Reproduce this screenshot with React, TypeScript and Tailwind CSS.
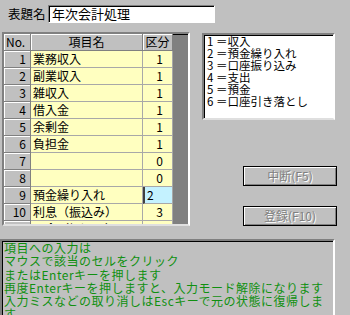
const rows: [number, string, string][] = [
  [1, "業務収入", "1"],
  [2, "副業収入", "1"],
  [3, "雑収入", "1"],
  [4, "借入金", "1"],
  [5, "余剰金", "1"],
  [6, "負担金", "1"],
  [7, "", "0"],
  [8, "", "0"],
  [9, "預金繰り入れ", "2"],
  [10, "利息（振込み）", "3"],
  [11, "入金（振込み）", "3"],
];

const kinds = [
  "1 ＝収入",
  "2 ＝預金繰り入れ",
  "3 ＝口座振り込み",
  "4 ＝支出",
  "5 ＝預金",
  "6 ＝口座引き落とし",
];

const help = [
  "項目への入力は",
  "マウスで該当のセルをクリック",
  "またはEnterキーを押します",
  "再度Enterキーを押しますと、入力モード解除になります",
  "入力ミスなどの取り消しはEscキーで元の状態に復帰しま",
  "す",
];

const fixedCell =
  "bg-[#c0c0c0] border-r border-b border-[#808080] shadow-[inset_1px_1px_0_#fff]";

const App = () => {
  return (
    <div className="w-[350px] h-[315px] overflow-hidden bg-[#c0c0c0] text-black font-['Noto_Sans_CJK_JP',sans-serif]">
      {/* title */}
      <div className="flex items-center pt-[5px] pl-[8px] h-[23px]">
        <span className="w-[40px] text-[12.5px] leading-[18px] whitespace-nowrap">表題名</span>
        <div className="w-[167px] h-[18px] bg-white border border-t-[#808080] border-l-[#808080] border-r-white border-b-white shadow-[inset_1px_1px_0_#000] pl-[3px] text-[13px] leading-[16px]">
          年次会計処理
        </div>
      </div>

      <div className="flex mt-[9px]">
        {/* grid */}
        <div className="ml-[2px] w-[188px] h-[194px] border-2 border-t-[#808080] border-l-[#808080] border-r-white border-b-[#dfdfdf] bg-[#808080] overflow-hidden shadow-[inset_1px_1px_0_#000]">
          <div className="flex h-[17px] text-[12px] leading-[16px]">
            <div className={`${fixedCell} w-[27px] pl-[2px]`}>No.</div>
            <div className={`${fixedCell} w-[112px] text-center`}>項目名</div>
            <div className={`${fixedCell} w-[30px] text-center`}>区分</div>
          </div>
          {rows.map(([no, name, kind]) => (
            <div key={no} className="flex h-[17px] text-[12px] leading-[16px]">
              <div className={`${fixedCell} w-[27px] text-right pr-[4px]`}>{no}</div>
              <div className="w-[112px] bg-[#ffffc0] border-r border-b border-[#a8a8a8] pl-[2px] whitespace-nowrap">
                {name}
              </div>
              {no === 9 ? (
                <div className="w-[30px] bg-[#c4f2ff] border-r border-b border-[#a8a8a8] border-l-2 border-l-[#404040] pl-[2px]">
                  {kind}
                </div>
              ) : (
                <div className="w-[30px] bg-[#ffffc0] border-r border-b border-[#a8a8a8] text-right pr-[9px]">
                  {kind}
                </div>
              )}
            </div>
          ))}
        </div>

        {/* right side */}
        <div className="ml-[12px] w-[135px] flex flex-col">
          <div className="mt-[1px] w-[133px] h-[87px] bg-white border-2 border-t-[#808080] border-l-[#808080] border-r-white border-b-[#dfdfdf] shadow-[inset_1px_1px_0_#000] pl-[3px] text-[11.5px] leading-[12px]">
            {kinds.map((k) => (
              <div key={k} className="whitespace-nowrap">{k}</div>
            ))}
          </div>
          <button className="mt-[46px] ml-[41px] w-[94px] h-[20px] border border-black bg-[#c0c0c0] shadow-[inset_1px_1px_0_#fff,inset_-1px_-1px_0_#808080] text-[12px] leading-[18px] text-[#808080] [text-shadow:1px_1px_0_#fff]">
            中断(F5)
          </button>
          <button className="mt-[20px] ml-[41px] w-[94px] h-[20px] border border-black bg-[#c0c0c0] shadow-[inset_1px_1px_0_#fff,inset_-1px_-1px_0_#808080] text-[12px] leading-[18px] text-[#808080] [text-shadow:1px_1px_0_#fff]">
            登録(F10)
          </button>
        </div>
      </div>

      {/* help text */}
      <div className="mt-[13px] w-[335px] h-[90px] border-2 border-t-[#808080] border-l-[#808080] border-r-white border-b-white shadow-[inset_1px_1px_0_#000] pl-[2px] text-[12px] tracking-[0.5px] leading-[13.3px] text-[#109010]">
        {help.map((line) => (
          <div key={line} className="whitespace-nowrap">{line}</div>
        ))}
      </div>
    </div>
  );
};

export default App;
